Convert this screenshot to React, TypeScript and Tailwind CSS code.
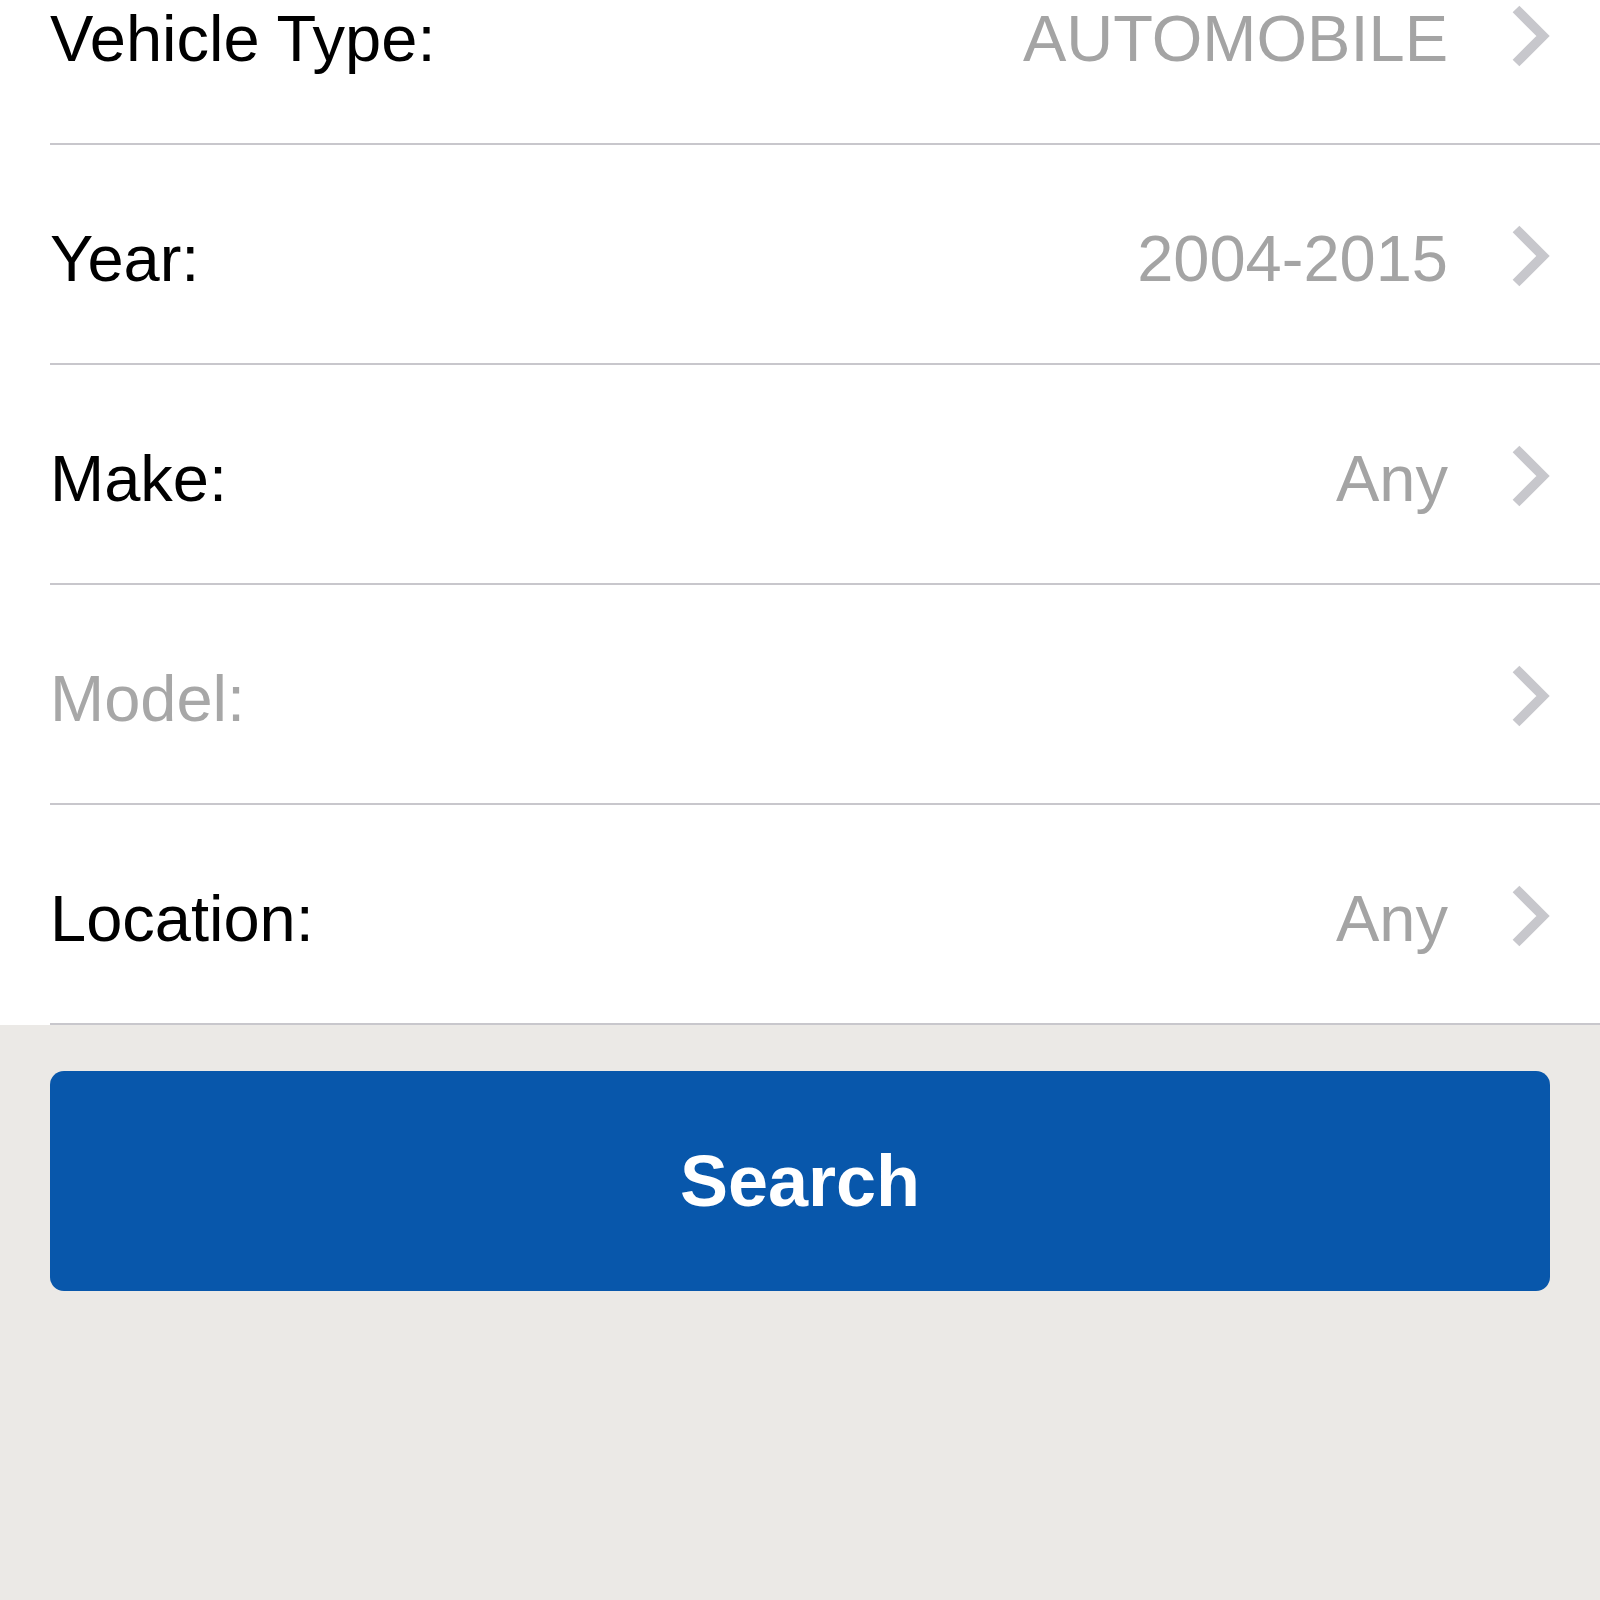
const rows = [
    { label: 'Vehicle Type:', value: 'AUTOMOBILE' },
    { label: 'Year:', value: '2004-2015' },
    { label: 'Make:', value: 'Any' },
    { label: 'Model:', value: '', disabled: true },
    { label: 'Location:', value: 'Any' },
];

function Chevron() {
    return (
        <svg className="w-[40px] h-[62px] shrink-0" viewBox="0 0 40 62" fill="none">
            <polyline points="6,4 33,31 6,58" stroke="#c7c7cc" strokeWidth="9.5" strokeLinejoin="miter" />
        </svg>
    );
}

export default function App() {
    return (
        <div className="w-[1600px] h-[1600px] overflow-hidden bg-[#ebe9e6] font-['Liberation_Sans',Arial,sans-serif]">
            <div className="bg-white pl-[50px] mt-[-75px]">
                {rows.map((row) => (
                    <div
                        key={row.label}
                        className="flex items-center h-[220px] pt-[4px] border-b-2 border-[#c8c7cc] pr-[50px]"
                    >
                        <div
                            className={`text-[65px] leading-none pt-[5px] ${row.disabled ? 'text-[#a7a7a7]' : 'text-black'}`}
                        >
                            {row.label}
                        </div>
                        <div className="ml-auto text-[65px] leading-none pt-[5px] text-[#a4a4a4]">{row.value}</div>
                        <div className="ml-[62px] flex items-center">
                            <Chevron />
                        </div>
                    </div>
                ))}
            </div>
            <div className="px-[50px] pt-[46px]">
                <button className="w-full h-[220px] rounded-[14px] bg-[#0857ab] text-white font-bold text-[72px]">
                    Search
                </button>
            </div>
        </div>
    );
}
